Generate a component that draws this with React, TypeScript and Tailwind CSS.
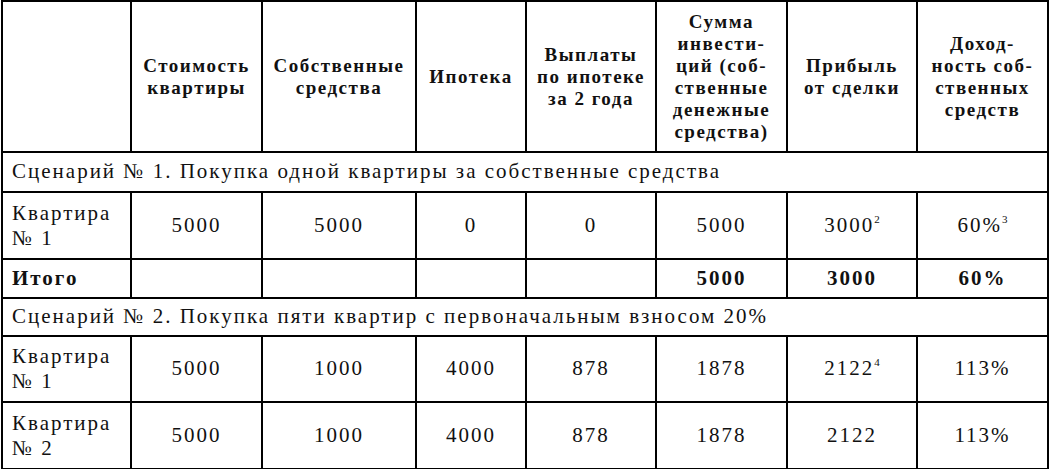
import React from 'react';

const headerLines: string[][] = [
    [],
    ['Стоимость', 'квартиры'],
    ['Собственные', 'средства'],
    ['Ипотека'],
    ['Выплаты', 'по ипотеке', 'за 2 года'],
    ['Сумма', 'инвести-', 'ций (соб-', 'ственные', 'денежные', 'средства)'],
    ['Прибыль', 'от сделки'],
    ['Доход-', 'ность соб-', 'ственных', 'средств'],
];

type Cell = { v: string; sup?: string };

const td = 'border-2 border-black';

function Flat({ name, cells, h }: { name: string[]; cells: Cell[]; h: string }) {
    return (
        <tr className={h}>
            <td className={`${td} px-[9px] text-left align-middle leading-[25px]`}>
                {name[0]}
                <br />
                {name[1]}
            </td>
            {cells.map((c, i) => (
                <td key={i} className={`${td} text-center align-middle`}>
                    {c.v}
                    {c.sup && <sup className="text-[11px] -top-[9px] tracking-normal">{c.sup}</sup>}
                </td>
            ))}
        </tr>
    );
}

export default function App() {
    return (
        <div className="w-[1050px] h-[469px] bg-white text-[#111] font-['Liberation_Serif','Times_New_Roman',serif]">
            <table className="table-fixed border-collapse w-[1048px] ml-[1px] text-[21px] tracking-[2px]">
                <colgroup>
                    <col className="w-[129px]" />
                    <col className="w-[131px]" />
                    <col className="w-[154px]" />
                    <col className="w-[110px]" />
                    <col className="w-[130px]" />
                    <col className="w-[131px]" />
                    <col className="w-[130px]" />
                    <col className="w-[131px]" />
                </colgroup>
                <tbody>
                    <tr className="h-[151px]">
                        {headerLines.map((lines, i) => (
                            <th
                                key={i}
                                className={`${td} text-center align-middle font-bold text-[19px] leading-[22px] tracking-[1.5px] px-0`}
                            >
                                {lines.map((l, j) => (
                                    <div key={j}>{l}</div>
                                ))}
                            </th>
                        ))}
                    </tr>
                    <tr className="h-[40px]">
                        <td colSpan={8} className={`${td} px-[9px] text-left align-middle`}>
                            Сценарий № 1. Покупка одной квартиры за собственные средства
                        </td>
                    </tr>
                    <Flat
                        h="h-[67px]"
                        name={['Квартира', '№ 1']}
                        cells={[
                            { v: '5000' },
                            { v: '5000' },
                            { v: '0' },
                            { v: '0' },
                            { v: '5000' },
                            { v: '3000', sup: '2' },
                            { v: '60%', sup: '3' },
                        ]}
                    />
                    <tr className="h-[39px] font-bold">
                        <td className={`${td} px-[9px] text-left align-middle`}>Итого</td>
                        <td className={td}></td>
                        <td className={td}></td>
                        <td className={td}></td>
                        <td className={td}></td>
                        <td className={`${td} text-center align-middle`}>5000</td>
                        <td className={`${td} text-center align-middle`}>3000</td>
                        <td className={`${td} text-center align-middle`}>60%</td>
                    </tr>
                    <tr className="h-[38px]">
                        <td colSpan={8} className={`${td} px-[9px] text-left align-middle`}>
                            Сценарий № 2. Покупка пяти квартир с первоначальным взносом 20%
                        </td>
                    </tr>
                    <Flat
                        h="h-[66px]"
                        name={['Квартира', '№ 1']}
                        cells={[
                            { v: '5000' },
                            { v: '1000' },
                            { v: '4000' },
                            { v: '878' },
                            { v: '1878' },
                            { v: '2122', sup: '4' },
                            { v: '113%' },
                        ]}
                    />
                    <Flat
                        h="h-[67px]"
                        name={['Квартира', '№ 2']}
                        cells={[
                            { v: '5000' },
                            { v: '1000' },
                            { v: '4000' },
                            { v: '878' },
                            { v: '1878' },
                            { v: '2122' },
                            { v: '113%' },
                        ]}
                    />
                </tbody>
            </table>
        </div>
    );
}
